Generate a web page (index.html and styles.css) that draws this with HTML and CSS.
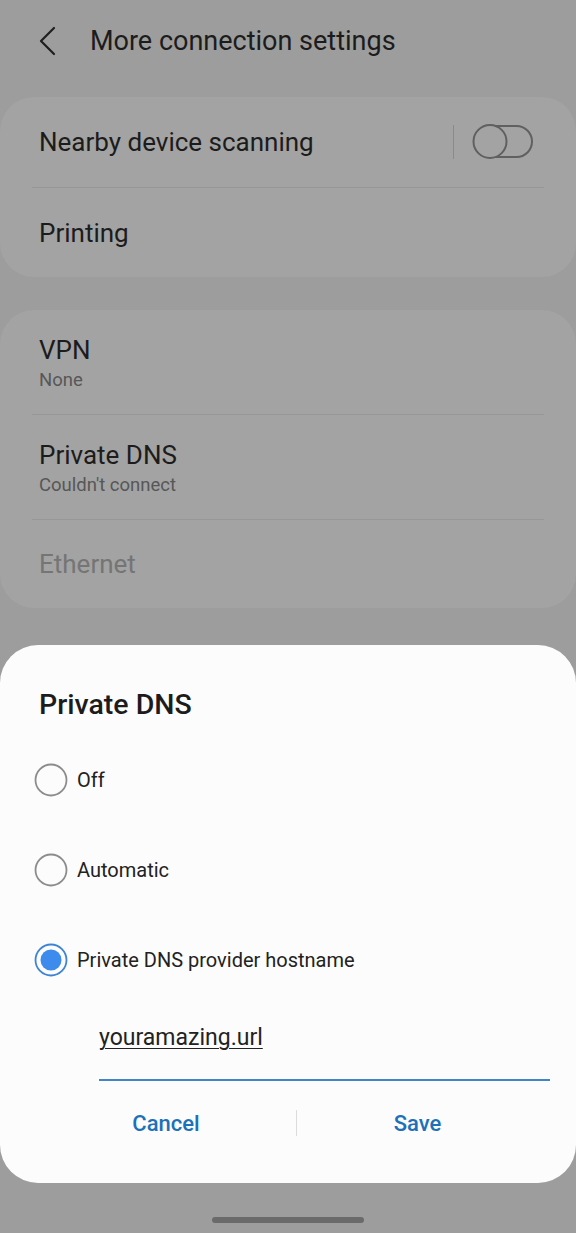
FILE: index.html
```html
<!DOCTYPE html>
<html>
<head>
<meta charset="utf-8">
<link rel="stylesheet" href="styles.css">
</head>
<body>
<div class="screen">
  <header class="topbar">
    <svg class="back" width="20" height="30" viewBox="0 0 20 30"><path d="M16 2 L3 15 L16 28" fill="none" stroke="#1f1f1f" stroke-width="2.2" stroke-linecap="round" stroke-linejoin="round"/></svg>
    <h1 class="title">More connection settings</h1>
  </header>

  <section class="card">
    <div class="row">
      <span class="label">Nearby device scanning</span>
      <div class="switch-wrap">
        <span class="vsep"></span>
        <svg width="62" height="38" viewBox="0 0 62 38"><rect x="2" y="3" width="58" height="31" rx="15.5" fill="none" stroke="#606060" stroke-width="2"/><circle cx="18" cy="18.5" r="16.5" fill="#a3a3a3" stroke="#606060" stroke-width="2"/></svg>
      </div>
    </div>
    <div class="divider"></div>
    <div class="row second"><span class="label">Printing</span></div>
  </section>

  <section class="card card2">
    <div class="row tall">
      <span class="label">VPN</span>
      <span class="sub">None</span>
    </div>
    <div class="divider"></div>
    <div class="row tall">
      <span class="label">Private DNS</span>
      <span class="sub">Couldn't connect</span>
    </div>
    <div class="divider"></div>
    <div class="row short"><span class="label disabled">Ethernet</span></div>
  </section>

  <div class="dialog">
    <h2 class="dtitle">Private DNS</h2>
    <div class="opt">
      <svg width="36" height="36" viewBox="0 0 36 36"><circle cx="18" cy="18" r="15.5" fill="none" stroke="#8c8c8c" stroke-width="1.8"/></svg>
      <span>Off</span>
    </div>
    <div class="opt">
      <svg width="36" height="36" viewBox="0 0 36 36"><circle cx="18" cy="18" r="15.5" fill="none" stroke="#8c8c8c" stroke-width="1.8"/></svg>
      <span>Automatic</span>
    </div>
    <div class="opt">
      <svg width="36" height="36" viewBox="0 0 36 36"><circle cx="18" cy="18" r="15.5" fill="none" stroke="#3f84d4" stroke-width="1.8"/><circle cx="18" cy="18" r="10.5" fill="#3d8bec"/></svg>
      <span>Private DNS provider hostname</span>
    </div>
    <div class="field">
      <span class="value">youramazing.url</span>
    </div>
    <div class="buttons">
      <span class="btn">Cancel</span>
      <span class="bsep"></span>
      <span class="btn">Save</span>
    </div>
  </div>

  <div class="home"></div>
</div>
</body>
</html>
```

FILE: styles.css
```css
* { box-sizing: border-box; margin: 0; padding: 0; }
html, body { width: 576px; height: 1233px; overflow: hidden; }
body {
  background: #9d9d9d;
  font-family: Roboto, "Noto Sans", "Liberation Sans", sans-serif;
  color: #1c1c1c;
}
.screen { position: relative; width: 576px; height: 1233px; }

.topbar {
  height: 97px;
  display: flex;
  align-items: flex-start;
  padding-top: 26px;
  padding-left: 38px;
}
.back { display: block; margin-right: 32px; }
.title {
  font-size: 27px;
  font-weight: 400;
  line-height: 30px;
  color: #1c1c1c;
}

.card {
  background: #a3a3a3;
  border-radius: 34px;
  display: flex;
  flex-direction: column;
}
.card2 { margin-top: 33px; }

.row {
  height: 90px;
  padding: 0 39px;
  display: flex;
  align-items: center;
  justify-content: space-between;
}
.row.second { height: 89px; }
.row.tall {
  height: 104px;
  flex-direction: column;
  align-items: flex-start;
  justify-content: flex-start;
  padding-top: 25px;
}
.row.short { height: 88px; }
.label { font-size: 26px; line-height: 30px; color: #1c1c1c; }
.label.disabled { color: #757575; }
.sub { font-size: 18.5px; line-height: 24px; color: #575757; margin-top: 3px; }

.divider { height: 1px; background: #979797; margin: 0 32px; }

.switch-wrap { display: flex; align-items: center; margin-right: 3px; }
.vsep { width: 1px; height: 34px; background: #8a8a8a; margin-right: 18px; }
.switch-wrap svg { display: block; }

.dialog {
  position: absolute;
  left: 0;
  right: 0;
  top: 645px;
  height: 538px;
  background: #fcfcfc;
  border-radius: 38px;
  padding-top: 45px;
  padding-left: 39px;
  padding-right: 26px;
  display: flex;
  flex-direction: column;
}
.dtitle { font-size: 28.5px; font-weight: 500; line-height: 30px; color: #1c1c1c; margin-bottom: 15px; }
.opt {
  height: 90px;
  display: flex;
  align-items: center;
  margin-left: -6px;
  font-size: 20px;
  color: #222;
}
.opt svg { display: block; margin-right: 8px; }
.field {
  margin-left: 60px;
  padding-top: 19px;
  height: 76px;
  border-bottom: 2px solid #3f86c6;
}
.value {
  font-size: 23px;
  line-height: 28px;
  text-decoration: underline;
  text-underline-offset: 3px;
  text-decoration-thickness: 1px;
  color: #222;
}
.buttons {
  height: 84px;
  display: flex;
  align-items: center;
  margin-left: -39px;
  margin-right: -26px;
}
.btn {
  flex: 1;
  text-align: center;
  font-size: 22px;
  font-weight: 500;
  color: #1c71b9;
}
.buttons .btn:first-child { flex: 0 0 296px; padding-left: 36px; }
.buttons .btn:last-child { padding-right: 38px; }
.bsep { width: 1px; height: 26px; background: #dcdcdc; }

.home {
  position: absolute;
  left: 212px;
  top: 1217px;
  width: 152px;
  height: 6px;
  border-radius: 3px;
  background: #6a6a6a;
}
```
